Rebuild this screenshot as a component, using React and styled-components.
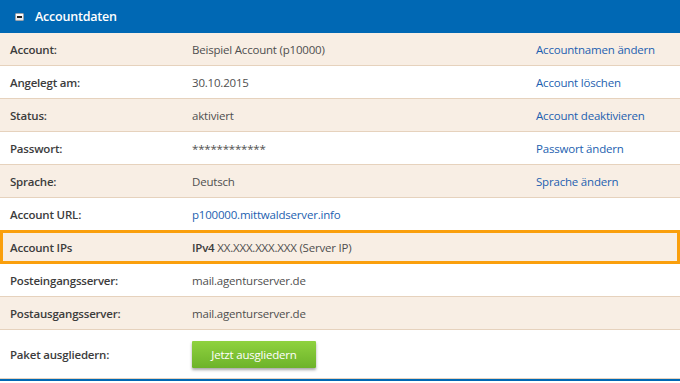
import React from "react";
import styled, { createGlobalStyle } from "styled-components";

const GlobalStyle = createGlobalStyle`
  html, body {
    margin: 0;
    padding: 0;
    background: #ffffff;
  }
  body {
    font-family: "Open Sans", "Noto Sans", sans-serif;
    font-size: 11.5px;
    letter-spacing: -0.2px;
    color: #4a4a4a;
  }
`;

const rows = [
  { label: "Account:", value: "Beispiel Account (p10000)", action: "Accountnamen ändern" },
  { label: "Angelegt am:", value: "30.10.2015", action: "Account löschen" },
  { label: "Status:", value: "aktiviert", action: "Account deaktivieren" },
  { label: "Passwort:", value: "************", action: "Passwort ändern" },
  { label: "Sprache:", value: "Deutsch", action: "Sprache ändern" },
  { label: "Account URL:", link: "p100000.mittwaldserver.info" },
  { label: "Account IPs", ip: true, highlight: true },
  { label: "Posteingangsserver:", value: "mail.agenturserver.de" },
  { label: "Postausgangsserver:", value: "mail.agenturserver.de" },
];

const App = () => (
  <>
    <GlobalStyle />
    <Panel>
      <Header>
        <Toggle />
        <Title>Accountdaten</Title>
      </Header>
      {rows.map((r, i) => (
        <Row key={r.label} $shaded={i % 2 === 0} $highlight={r.highlight}>
          <Label>{r.label}</Label>
          <Value>
            {r.link && <Link>{r.link}</Link>}
            {r.ip && (
              <>
                <strong>IPv4</strong> XX.XXX.XXX.XXX (Server IP)
              </>
            )}
            {r.value}
          </Value>
          <Action>{r.action && <Link>{r.action}</Link>}</Action>
        </Row>
      ))}
      <Row $tall>
        <Label>Paket ausgliedern:</Label>
        <Value>
          <Button>Jetzt ausgliedern</Button>
        </Value>
        <Action />
      </Row>
    </Panel>
  </>
);

const Panel = styled.div`
  width: 680px;
  border-bottom: 2px solid #0068b4;
`;

const Header = styled.div`
  height: 33px;
  background: #0068b4;
  display: flex;
  align-items: center;
  padding-left: 15px;
  gap: 11px;
`;

const Toggle = styled.span`
  position: relative;
  width: 7px;
  height: 6px;
  border: 1px solid #9aa3ad;
  border-radius: 1px;
  background: linear-gradient(#ffffff, #dde2e8);
  &::after {
    content: "";
    position: absolute;
    left: 1px;
    right: 1px;
    top: 2px;
    height: 2px;
    background: #222;
  }
`;

const Title = styled.span`
  color: #ffffff;
  font-size: 12.5px;
  font-weight: 600;
`;

const Row = styled.div`
  display: grid;
  grid-template-columns: 182px 344px 1fr;
  align-items: center;
  height: ${(p) => (p.$tall ? "49px" : "33px")};
  box-sizing: border-box;
  background: ${(p) => (p.$shaded ? "#f8eee4" : "#ffffff")};
  border-bottom: 1px solid #e6d2bd;
  ${(p) =>
    p.$highlight &&
    `
    border-bottom: none;
    margin-top: -1px;
    height: 34px;
    padding-top: 1px;
    box-shadow: inset 0 0 0 3px #fa9f0c;
  `}
`;

const Label = styled.div`
  padding-left: 10px;
  font-weight: 600;
  color: #3c3c3c;
  white-space: nowrap;
`;

const Value = styled.div`
  padding-left: 10px;
  color: #4f4f4f;
  white-space: nowrap;
  strong {
    font-weight: 600;
    color: #3c3c3c;
  }
`;

const Action = styled.div`
  padding-left: 10px;
  white-space: nowrap;
`;

const Link = styled.span`
  color: #1d5fb0;
  cursor: pointer;
`;

const Button = styled.button`
  font-family: inherit;
  font-size: 11.5px;
  letter-spacing: -0.2px;
  color: #ffffff;
  width: 124px;
  height: 27px;
  border: none;
  border-radius: 1px;
  background: linear-gradient(#8fd23f, #6db32a);
  box-shadow: 0 2px 3px rgba(0, 0, 0, 0.35);
  cursor: pointer;
`;

export default App;
